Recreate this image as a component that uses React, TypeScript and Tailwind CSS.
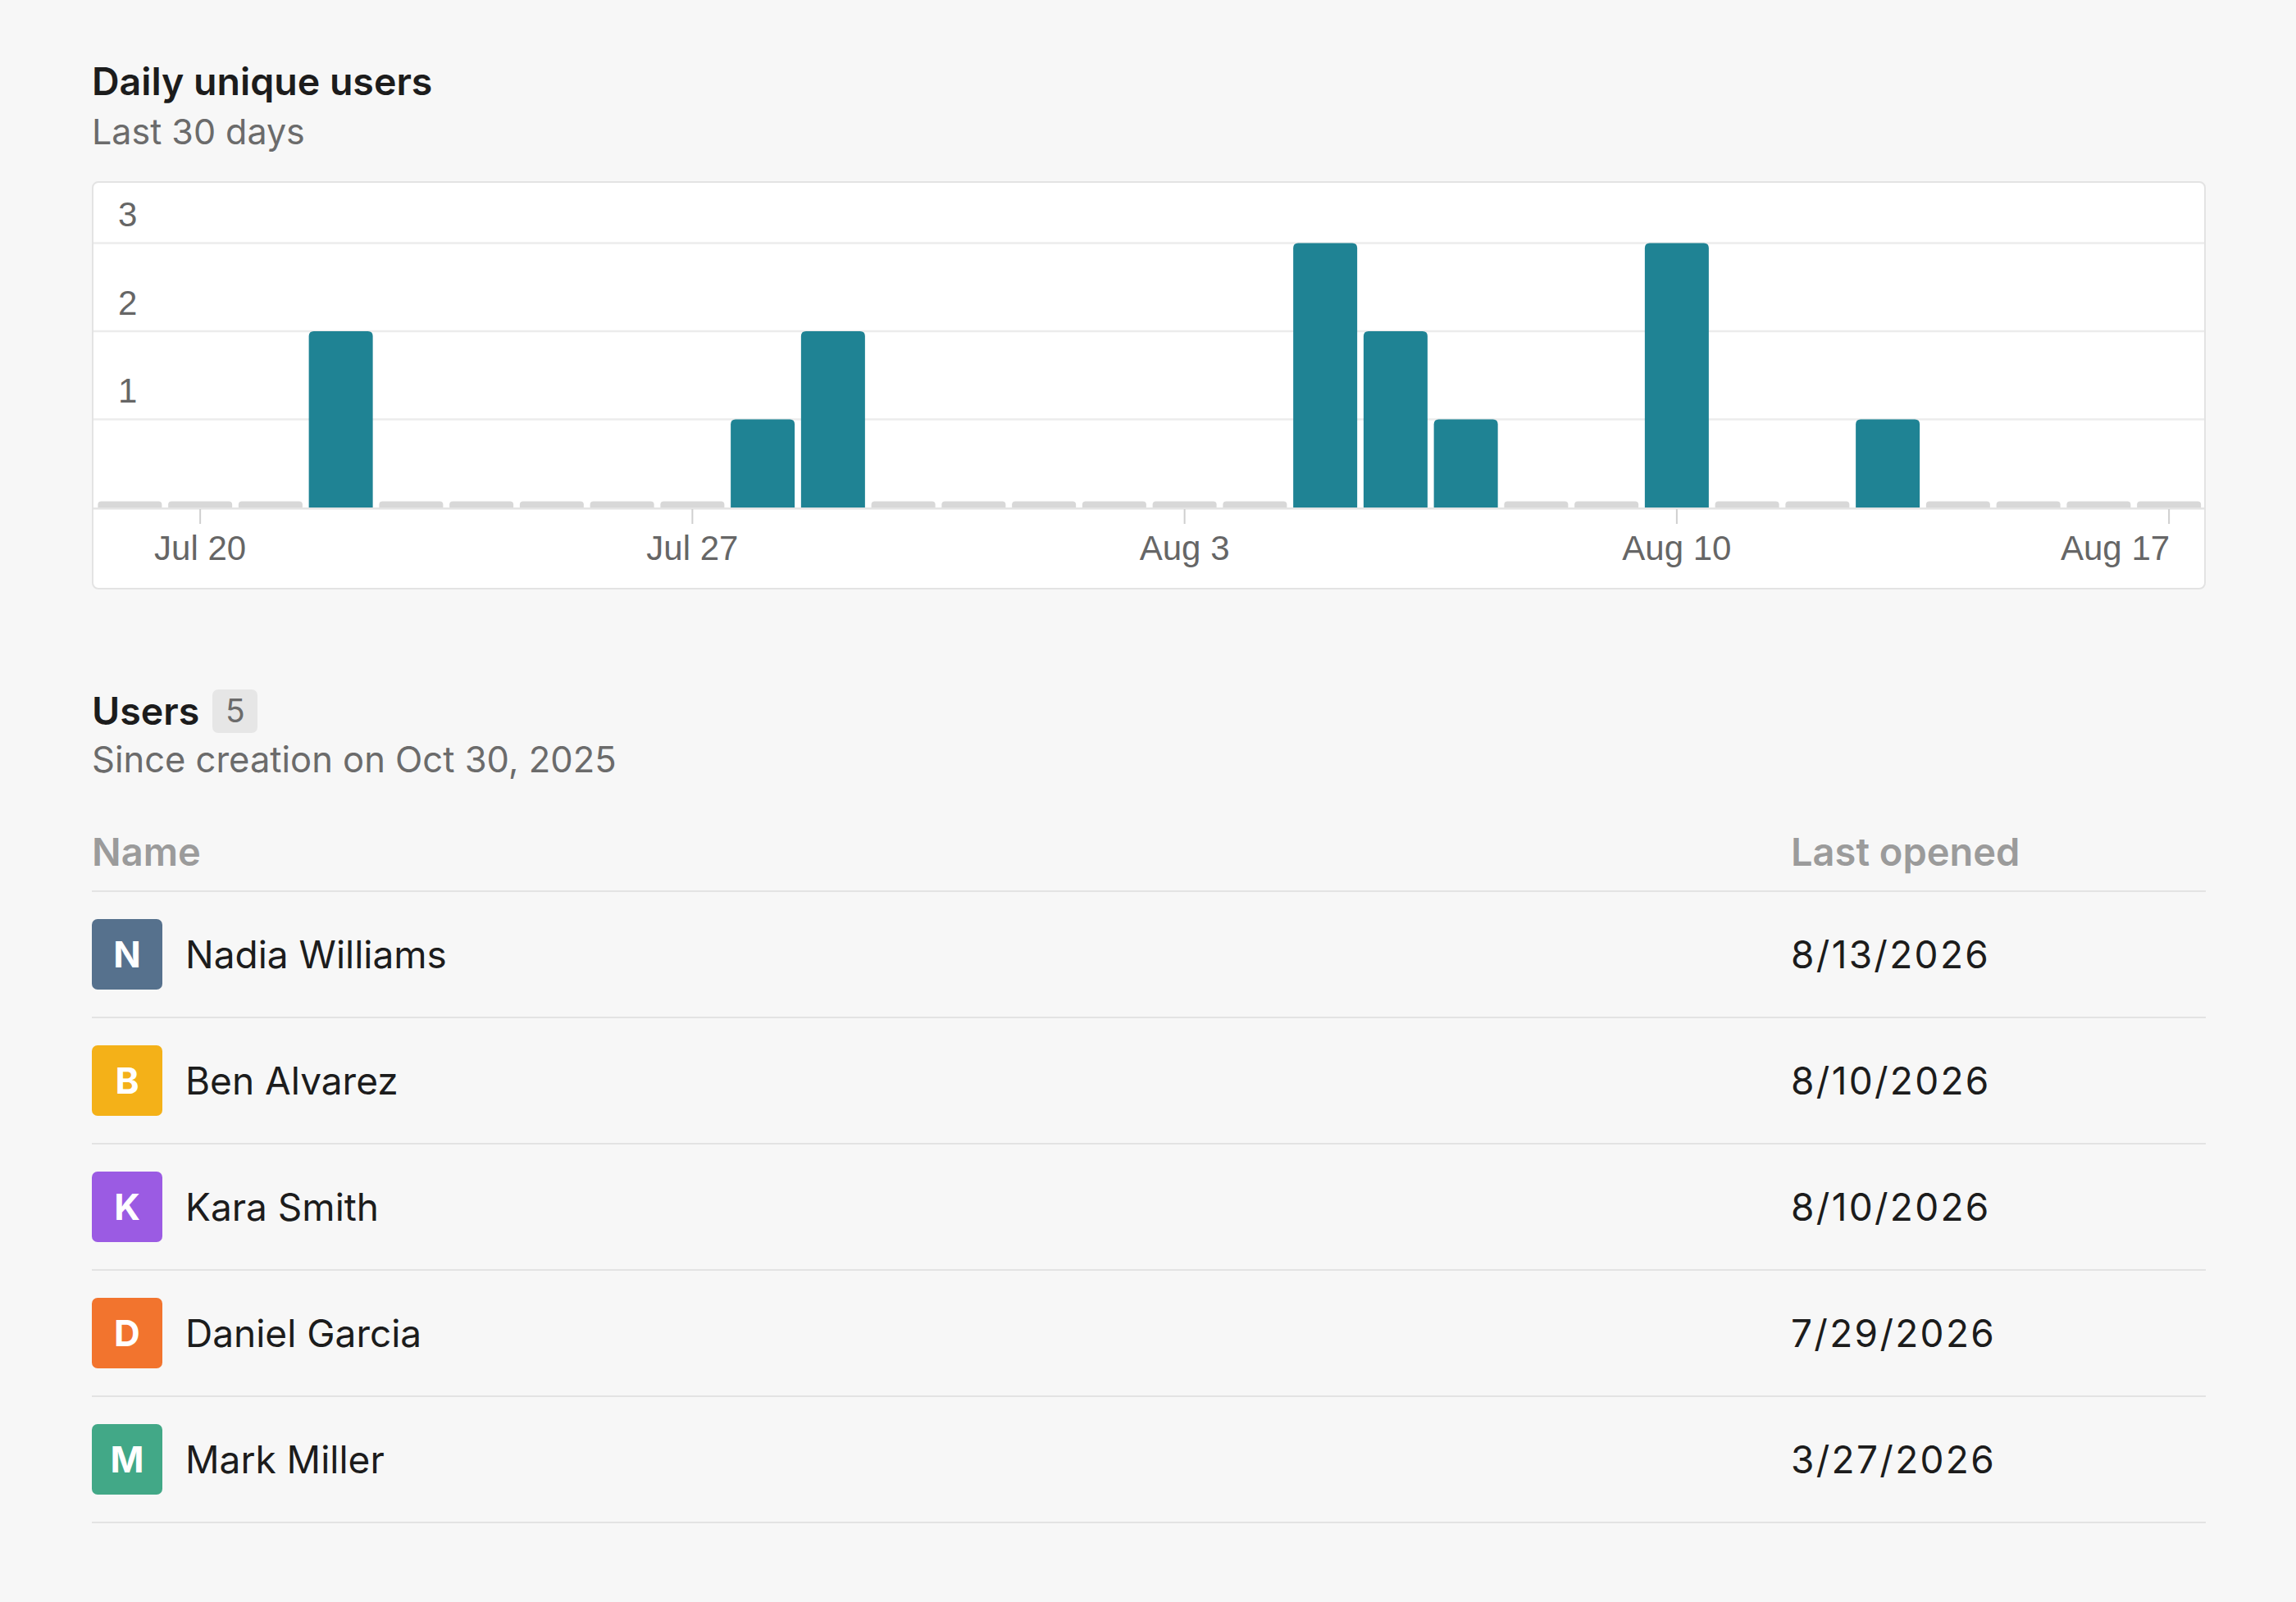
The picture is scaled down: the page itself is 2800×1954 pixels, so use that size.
import React from "react";

const values = [0, 0, 0, 2, 0, 0, 0, 0, 0, 1, 2, 0, 0, 0, 0, 0, 0, 3, 2, 1, 0, 0, 3, 0, 0, 1, 0, 0, 0, 0];

const W = 2574;
const H = 494;
const OFF = 1.5;
const SLOT = (W - OFF) / 30;
const BAR = 78;
const BASE = 396;
const STEP = 107.5;

function barPath(x: number, top: number, w: number, bottom: number, r: number) {
  return `M${x},${bottom} L${x},${top + r} Q${x},${top} ${x + r},${top} L${x + w - r},${top} Q${x + w},${top} ${x + w},${top + r} L${x + w},${bottom} Z`;
}

function Chart() {
  const ticks = [
    { i: 1, label: "Jul 20" },
    { i: 8, label: "Jul 27" },
    { i: 15, label: "Aug 3" },
    { i: 22, label: "Aug 10" },
    { i: 29, label: "Aug 17" },
  ];
  return (
    <svg width={W} height={H} viewBox={`0 0 ${W} ${H}`} className="block">
      {[1, 2, 3].map((v) => (
        <line key={v} x1={0} x2={W} y1={BASE - v * STEP} y2={BASE - v * STEP} stroke="#ececec" strokeWidth={2.5} />
      ))}
      {[1, 2, 3].map((v) => (
        <text
          key={v}
          x={30}
          y={BASE - v * STEP - 20.5}
          fontFamily="'Liberation Sans', Arial, sans-serif"
          fontSize={42}
          fill="#666666"
        >
          {v}
        </text>
      ))}
      {values.map((v, i) => {
        const x = OFF + i * SLOT + (SLOT - BAR) / 2;
        if (v === 0) {
          return <path key={i} d={barPath(x, BASE - 7.5, BAR, BASE, 4)} fill="#d8d8d8" />;
        }
        return <path key={i} d={barPath(x, BASE - v * STEP, BAR, BASE, 6)} fill="#1f8394" />;
      })}
      <line x1={0} x2={W} y1={BASE + 1.2} y2={BASE + 1.2} stroke="#e4e4e4" strokeWidth={2.5} />
      {ticks.map((t, k) => {
        const cx = OFF + t.i * SLOT + SLOT / 2;
        const last = k === ticks.length - 1;
        return (
          <g key={t.label}>
            <line x1={cx} x2={cx} y1={BASE + 2} y2={BASE + 20} stroke="#cfcfcf" strokeWidth={2} />
            <text
              x={last ? cx + 1 : cx}
              y={460}
              textAnchor={last ? "end" : "middle"}
              fontFamily="'Liberation Sans', Arial, sans-serif"
              fontSize={42}
              fill="#666666"
            >
              {t.label}
            </text>
          </g>
        );
      })}
    </svg>
  );
}

const users = [
  { initial: "N", name: "Nadia Williams", date: "8/13/2026", color: "bg-[#56718d]" },
  { initial: "B", name: "Ben Alvarez", date: "8/10/2026", color: "bg-[#f4b118]" },
  { initial: "K", name: "Kara Smith", date: "8/10/2026", color: "bg-[#9b5be3]" },
  { initial: "D", name: "Daniel Garcia", date: "7/29/2026", color: "bg-[#f2742e]" },
  { initial: "M", name: "Mark Miller", date: "3/27/2026", color: "bg-[#42a887]" },
];

export default function App() {
  return (
    <div className="min-h-[1954px] bg-[#f7f7f7] pl-[112px] pr-[110px] pt-[72px] font-['Inter',sans-serif] antialiased">
      <h2 className="text-[46.5px] leading-[54px] font-semibold text-[#1c1c1c]">Daily unique users</h2>
      <p className="mt-[8px] text-[43px] leading-[53px] text-[#6b6b6b]">Last 30 days</p>
      <div className="mt-[34px] h-[498px] rounded-[8px] border-2 border-[#e3e3e3] bg-white overflow-hidden">
        <Chart />
      </div>

      <div className="mt-[122px] flex items-center gap-[16px]">
        <h2 className="text-[46.5px] leading-[53px] font-semibold text-[#1c1c1c]">Users</h2>
        <span className="flex h-[53px] w-[55px] items-center justify-center rounded-[7px] bg-[#e6e6e6] text-[39px] text-[#6b6b6b]">
          5
        </span>
      </div>
      <p className="mt-[6px] text-[43.5px] leading-[53px] text-[#6b6b6b]">Since creation on Oct 30, 2025</p>

      <div className="mt-[59px] grid grid-cols-[1fr_506px] border-b-2 border-[#e3e3e3] pb-[21px] text-[47px] leading-[53px] font-semibold text-[#9b9b9b]">
        <div>Name</div>
        <div>Last opened</div>
      </div>
      {users.map((u) => (
        <div key={u.name} className="grid h-[154px] grid-cols-[1fr_506px] items-center border-b-2 border-[#e3e3e3]">
          <div className="flex items-center gap-[28px]">
            <div
              className={`flex h-[86px] w-[86px] items-center justify-center rounded-[7px] ${u.color} text-[44px] font-bold text-white`}
            >
              {u.initial}
            </div>
            <span className="text-[46px] text-[#1c1c1c]">{u.name}</span>
          </div>
          <div className="text-[46px] tracking-[0.05em] text-[#1c1c1c]">{u.date}</div>
        </div>
      ))}
    </div>
  );
}
